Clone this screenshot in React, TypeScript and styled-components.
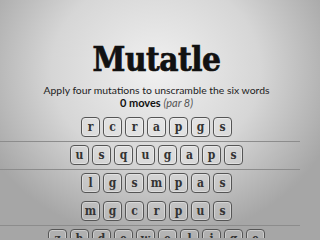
import React from 'react';
import styled, { createGlobalStyle } from 'styled-components';

const GlobalStyle = createGlobalStyle`
  html, body {
    margin: 0;
    padding: 0;
    height: 100%;
  }
  body {
    background: radial-gradient(ellipse 190px 170px at 156px 70px, #f0f0f0 0%, #d6d6d6 55%, #a6a6a6 100%);
    background-color: #a0a0a0;
    overflow: hidden;
  }
`;

const rows: { letters: string; divider: boolean }[] = [
  { letters: 'rcrapgs', divider: true },
  { letters: 'usqugaps', divider: true },
  { letters: 'lgsmpas', divider: false },
  { letters: 'mgcrpus', divider: true },
  { letters: 'zhdewelige', divider: false },
];

const App: React.FC = () => (
  <Page>
    <GlobalStyle />
    <Header>
      <Title>Mutatle</Title>
      <Intro>Apply four mutations to unscramble the six words</Intro>
      <Moves>
        <strong>0 moves</strong> <Par>(par 8)</Par>
      </Moves>
    </Header>
    <Board>
      {rows.map((row, i) => (
        <Row key={i} $divider={row.divider}>
          {row.letters.split('').map((ch, j) => (
            <Tile key={j}>{ch}</Tile>
          ))}
        </Row>
      ))}
    </Board>
  </Page>
);

export default App;

const Page = styled.div`
  width: 300px;
  height: 238px;
  overflow: hidden;
  display: flex;
  flex-direction: column;
`;

const Header = styled.header`
  display: flex;
  flex-direction: column;
  align-items: center;
  padding: 40px 0 0 13px;
`;

const Title = styled.h1`
  margin: 0;
  font-family: 'DejaVu Serif Condensed', 'DejaVu Serif', serif;
  font-weight: bold;
  font-size: 33px;
  line-height: 40px;
  color: #111;
  letter-spacing: -0.5px;
  -webkit-text-stroke: 0.7px #111;
`;

const Intro = styled.p`
  margin: 4px 0 0;
  font-family: Lato, 'Noto Sans', sans-serif;
  font-size: 10.4px;
  line-height: 12px;
  color: #222;
`;

const Moves = styled.p`
  margin: 0;
  font-family: Lato, 'Noto Sans', sans-serif;
  font-size: 11px;
  line-height: 13px;
  color: #111;
`;

const Par = styled.em`
  color: #555;
`;

const Board = styled.div`
  margin-top: 5px;
  display: flex;
  flex-direction: column;
`;

const Row = styled.div<{ $divider: boolean }>`
  display: flex;
  justify-content: center;
  align-items: flex-start;
  gap: 3px;
  height: 28px;
  box-sizing: border-box;
  padding: 3px 0 0 13px;
  border-bottom: 1px solid ${(p) => (p.$divider ? '#8c8c8c' : 'transparent')};
  flex-shrink: 0;
`;

const Tile = styled.span`
  width: 19px;
  height: 20px;
  box-sizing: border-box;
  display: flex;
  align-items: center;
  justify-content: center;
  border: 1px solid #555;
  border-radius: 4px;
  background: rgba(255, 255, 255, 0.12);
  box-shadow: inset 0 0 0 1px rgba(255, 255, 255, 0.35);
  font-family: 'DejaVu Serif Condensed', 'DejaVu Serif', serif;
  font-weight: bold;
  font-size: 12px;
  color: #333;
`;
